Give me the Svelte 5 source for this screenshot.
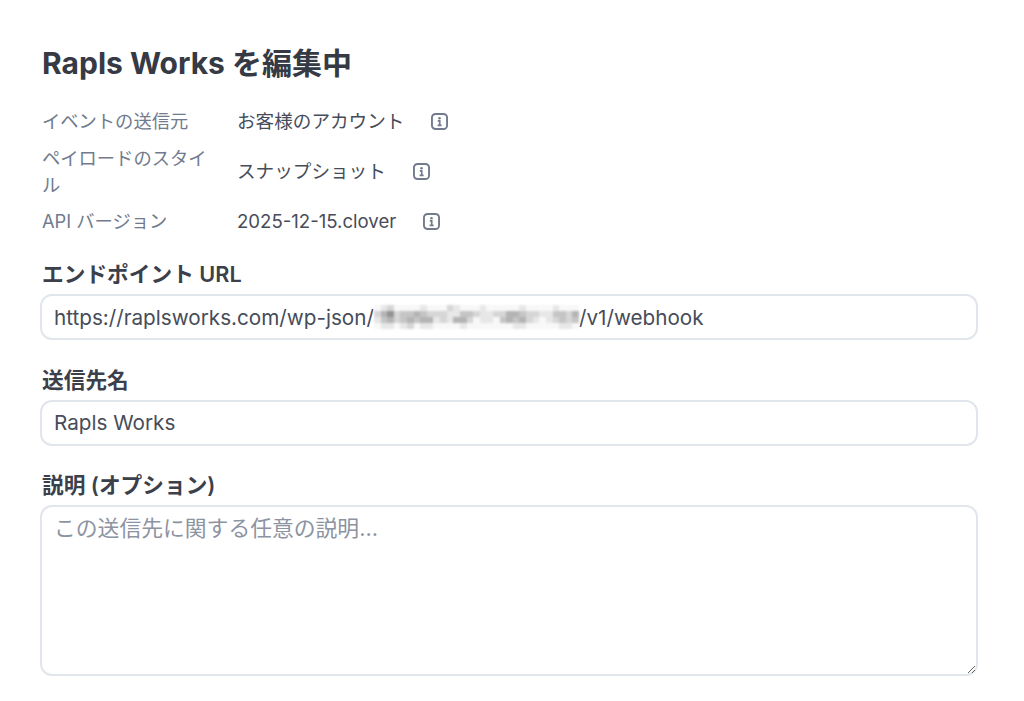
<script>
  const rows = [
    { label: 'イベントの送信元', value: 'お客様のアカウント' },
    { label: 'ペイロードのスタイル', value: 'スナップショット' },
    { label: 'API バージョン', value: '2025-12-15.clover' }
  ];
  const blur = [
    '0120000100021000100000100001000',
    '2462334322211332112244322113324',
    '1342343441214420110343421012323',
    '0110120110000100000001100000110'
  ].map((r) => r.split('').map(Number));
  const shade = (n) => { const v = 248 - n * 17; return `rgb(${v},${v},${v + 1})`; };
</script>

<main class="page">
  <h1>Rapls Works を編集中</h1>

  <dl class="meta">
    {#each rows as row}
      <div class="row">
        <dt>{row.label}</dt>
        <dd>
          <span>{row.value}</span>
          <svg class="info" viewBox="0 0 16 16" aria-hidden="true">
            <rect x="0.9" y="0.9" width="14.2" height="14.2" rx="3.4" fill="none" stroke="currentColor" stroke-width="1.8"/>
            <circle cx="8" cy="4.9" r="1.2" fill="currentColor"/>
            <path d="M6.4 7.4H8.2V11.6M6.2 11.6H10" fill="none" stroke="currentColor" stroke-width="1.6"/>
          </svg>
        </dd>
      </div>
    {/each}
  </dl>

  <div class="field first">
    <span class="label">エンドポイント URL</span>
    <div class="input">
      <span>https://raplsworks.com/wp-json/</span><span class="mosaic" aria-hidden="true">
        {#each blur as line}
          {#each line as cell}
            <i style="background:{shade(cell)}"></i>
          {/each}
        {/each}
      </span><span>/v1/webhook</span>
    </div>
  </div>

  <div class="field">
    <span class="label">送信先名</span>
    <div class="input">Rapls Works</div>
  </div>

  <div class="field">
    <label class="label" for="desc">説明 (オプション)</label>
    <textarea id="desc" placeholder="この送信先に関する任意の説明..."></textarea>
  </div>
</main>

<style>
  :global(body) {
    margin: 0;
    background: #fff;
  }
  .page {
    padding: 43px 46px 0 40px;
    font-family: Inter, "Noto Sans CJK JP", sans-serif;
    color: #474c59;
    height: 701px;
    box-sizing: border-box;
    overflow: hidden;
  }
  h1 {
    margin: 0 0 0 2px;
    font-size: 30px;
    line-height: 40px;
    font-weight: 700;
    color: #353a44;
  }
  .meta {
    margin: 25px 0 0 2px;
    display: flex;
    flex-direction: column;
    gap: 9.5px;
  }
  .row {
    display: flex;
    align-items: center;
  }
  dt {
    width: 175px;
    margin-right: 20px;
    font-size: 18.3px;
    line-height: 27px;
    color: #717b8d;
  }
  dd {
    margin: 0;
    display: flex;
    align-items: center;
    gap: 27px;
    font-size: 18.6px;
    line-height: 27px;
  }
  .info {
    width: 17px;
    height: 17px;
    color: #717b8d;
  }
  .field {
    margin-top: 25.5px;
    display: flex;
    flex-direction: column;
    gap: 6px;
  }
  .first {
    margin-top: 25px;
  }
  .label {
    font-size: 21.7px;
    line-height: 28px;
    font-weight: 600;
    margin-left: 2px;
    color: #3b404b;
  }
  .input {
    height: 46px;
    box-sizing: border-box;
    border: 2px solid #e1e5ec;
    border-radius: 12px;
    padding: 0 12px;
    display: flex;
    align-items: center;
    font-size: 20.7px;
    white-space: nowrap;
  }
  .mosaic {
    width: 205px;
    height: 24px;
    display: grid;
    grid-template-columns: repeat(31, 1fr);
    grid-template-rows: repeat(4, 1fr);
    filter: blur(1.1px);
  }
  textarea {
    height: 171px;
    box-sizing: border-box;
    border: 2px solid #e1e5ec;
    border-radius: 12px;
    padding: 7px 12px;
    font: inherit;
    font-size: 21.8px;
    line-height: 28px;
    color: inherit;
    resize: vertical;
    outline: none;
  }
  textarea::placeholder {
    color: #8c93a1;
    opacity: 1;
  }
</style>
